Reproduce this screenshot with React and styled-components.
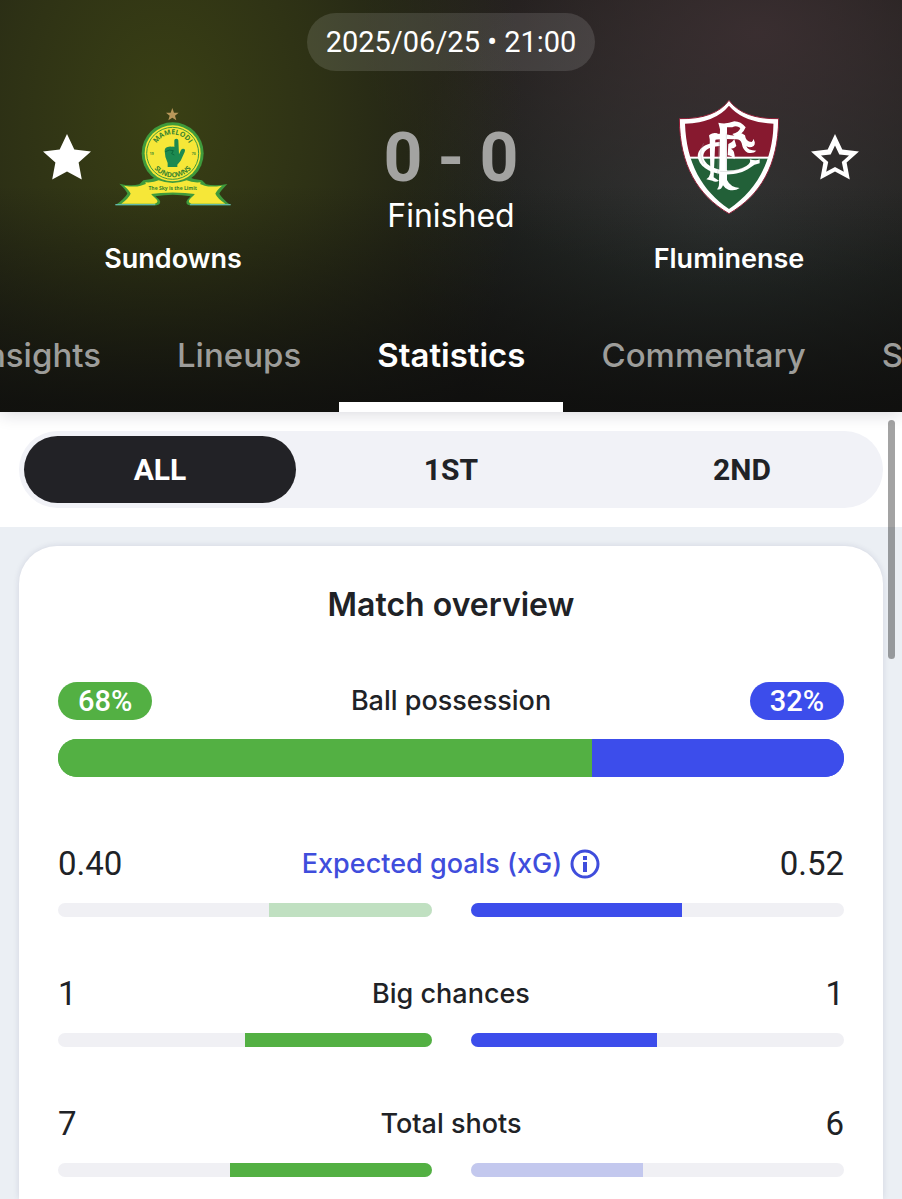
import React, { useLayoutEffect, useRef, useState } from "react";
import styled, { createGlobalStyle, css } from "styled-components";

const GlobalStyle = createGlobalStyle`
  *, *::before, *::after { box-sizing: border-box; }
  body { margin: 0; background: #ebeff4; color: #202226; font-family: Inter, "Liberation Sans", sans-serif; }
  button { font: inherit; color: inherit; background: none; border: 0; padding: 0; margin: 0; cursor: pointer; }
`;

const numeric = css`
  font-family: Roboto, "Liberation Sans", sans-serif;
`;

const Page = styled.div`
  position: relative;
  min-height: 100vh;
  display: flex;
  flex-direction: column;
`;

const Header = styled.header`
  position: relative;
  z-index: 1;
  color: #fff;
  padding-top: 13px;
  background:
    linear-gradient(to bottom, rgba(14, 14, 13, 0) 45%, rgba(14, 14, 13, 0.85) 98%),
    radial-gradient(ellipse 40% 120% at 18% 28%, #3a4014 0%, rgba(58, 64, 20, 0.6) 45%, rgba(58, 64, 20, 0) 100%),
    radial-gradient(ellipse 44% 62% at 84% 8%, rgba(62, 48, 51, 0.85) 0%, rgba(62, 48, 51, 0) 100%),
    radial-gradient(ellipse 36% 66% at 80% 52%, #2c3432 0%, rgba(44, 52, 50, 0) 100%),
    #1a1a17;
  box-shadow: 0 2px 16px rgba(20, 20, 50, 0.16);
`;

const Kickoff = styled.time`
  ${numeric}
  display: block;
  width: fit-content;
  margin: 0 auto;
  padding: 0 19px;
  border-radius: 29px;
  background: rgba(255, 255, 255, 0.12);
  font-size: 29px;
  line-height: 58px;
`;

const Scoreboard = styled.div`
  display: grid;
  grid-template-columns: auto 1fr auto;
  align-items: start;
  padding: 28px 38px 0;
`;

const Side = styled.div`
  display: flex;
  flex-direction: ${(p) => (p.$away ? "row-reverse" : "row")};
  gap: 19px;
`;

const StarButton = styled.button`
  width: 58px;
  height: 116px;
  display: grid;
  place-items: center;
`;

const Team = styled.div`
  width: 116px;
  display: flex;
  flex-direction: column;
  align-items: center;
  gap: 24px;
`;

const Crest = styled.div`
  width: 116px;
  height: 116px;
  display: grid;
  place-items: center;
  svg { display: block; }
`;

const TeamName = styled.span`
  font-size: 27px;
  line-height: 40px;
  font-weight: 600;
  white-space: nowrap;
`;

const Result = styled.div`
  display: flex;
  flex-direction: column;
  align-items: center;
  padding-top: 23px;
`;

const Score = styled.div`
  ${numeric}
  display: flex;
  gap: 15px;
  color: #a3a3a1;
  font-size: 68px;
  line-height: 72px;
  font-weight: 700;
`;

const Status = styled.span`
  font-size: 32px;
  line-height: 44px;
`;

const TabBar = styled.nav`
  position: relative;
  display: flex;
  margin-top: 36px;
  overflow-x: auto;
  scrollbar-width: none;
`;

const Tab = styled.button`
  flex: none;
  height: 97px;
  padding: 0 38px 8px;
  border-bottom: 10px solid ${(p) => (p.$active ? "#fff" : "transparent")};
  color: ${(p) => (p.$active ? "#fff" : "#9d9d9a")};
  font-size: 33px;
  line-height: 40px;
  font-weight: ${(p) => (p.$active ? 600 : 500)};
`;

const PeriodBar = styled.div`
  background: #fff;
  padding: 19px;
`;

const Segments = styled.div`
  display: grid;
  grid-template-columns: repeat(3, 1fr);
  gap: 19px;
  padding: 5px;
  border-radius: 39px;
  background: #f1f2f7;
`;

const Segment = styled.button`
  && { ${numeric} }
  height: 67px;
  border-radius: 34px;
  font-size: 30px;
  line-height: 67px;
  font-weight: 700;
  color: ${(p) => (p.$active ? "#fff" : "#202226")};
  background: ${(p) => (p.$active ? "#222226" : "transparent")};
`;

const Content = styled.main`
  flex: 1;
  display: flex;
  padding: 19px 19px 0;
`;

const Card = styled.section`
  flex: 1;
  padding: 38px 39px 20px;
  border-radius: 38px 38px 0 0;
  background: #fff;
  box-shadow: 0 0 6px rgba(30, 30, 80, 0.12);
`;

const CardTitle = styled.h2`
  margin: 0 0 57px;
  font-size: 32px;
  line-height: 41px;
  font-weight: 600;
  text-align: center;
`;

const StatRow = styled.div`
  display: grid;
  grid-template-columns: 1fr auto 1fr;
  align-items: center;
  height: 38px;
`;

const Possession = styled.div`
  margin-bottom: 68px;
`;

const Pill = styled.span`
  ${numeric}
  justify-self: ${(p) => (p.$away ? "end" : "start")};
  padding: 0 20px;
  border-radius: 19px;
  background: ${(p) => (p.$away ? "#3c4deb" : "#53b043")};
  color: #fff;
  font-size: 29px;
  line-height: 38px;
  font-weight: 500;
`;

const StatName = styled.span`
  font-size: 27px;
  line-height: 38px;
  font-weight: 500;
`;

const StatLink = styled.button`
  display: flex;
  align-items: center;
  gap: 8px;
  && { color: #3f4ddc; }
`;

const StatValue = styled.span`
  ${numeric}
  justify-self: ${(p) => (p.$away ? "end" : "start")};
  font-size: 33px;
  line-height: 38px;
`;

const SplitBar = styled.div`
  display: flex;
  height: 38px;
  margin-top: 19px;
  border-radius: 19px;
  overflow: hidden;
  background: linear-gradient(to right, #53b043 50%, #3c4deb 50%);
`;

const SplitFill = styled.div`
  background: ${(p) => (p.$away ? "#3c4deb" : "#53b043")};
`;

const Stat = styled.div`
  height: 130px;
  &:last-child { height: auto; }
`;

const Bars = styled.div`
  display: grid;
  grid-template-columns: 1fr 1fr;
  gap: 39px;
  margin-top: 20px;
`;

const Track = styled.div`
  display: flex;
  justify-content: ${(p) => (p.$away ? "flex-start" : "flex-end")};
  height: 14px;
  border-radius: 7px;
  overflow: hidden;
  background: #f0f0f4;
`;

const fills = { home: ["#53b043", "#c0e0c1"], away: ["#3c4deb", "#c3c8ee"] };

const Fill = styled.div`
  background: ${(p) => fills[p.$side][p.$faded ? 1 : 0]};
`;

const ScrollThumb = styled.div`
  position: absolute;
  z-index: 2;
  top: 420px;
  right: 7px;
  width: 7px;
  height: 239px;
  border-radius: 4px;
  background: rgba(0, 0, 0, 0.36);
`;

function StarIcon({ filled }) {
  return (
    <svg width="48" height="46" viewBox="0 0 48 46" aria-hidden="true">
      {filled ? (
        <path d="M24 0l7.3 15.6L48 17.4 35.6 28.6 38.8 45.4 24 37.6 9.2 45.4 12.4 28.6 0 17.4 16.7 15.6z" fill="#fff" />
      ) : (
        <path
          fillRule="evenodd"
          d="M24 0l7.3 15.6L48 17.4 35.6 28.6 38.8 45.4 24 37.6 9.2 45.4 12.4 28.6 0 17.4 16.7 15.6zM24 11.5l-4.3 9-9.7 1 7.2 6.6-2 9.7L24 33l8.8 4.8-2-9.7 7.2-6.6-9.7-1z"
          fill="#fff"
        />
      )}
    </svg>
  );
}

function SundownsCrest() {
  return (
    <svg width="116" height="100" viewBox="45 30 348 300" role="img" aria-label="Mamelodi Sundowns">
      <path d="M217 33l5 14 14 0-11 9 4 14-12-8-12 8 4-14-11-9 14 0z" fill="#b9975a" />
      <circle cx="218" cy="169" r="93" fill="#3f9a3c" />
      <path
        d="M58 260Q90 268 118 262L130 250Q150 250 170 240H266Q286 250 306 250L318 262Q346 268 382 261Q360 284 358 290Q366 304 392 325H268Q254 320 262 308L272 298Q218 288 166 298L178 308Q186 320 170 325H46Q74 304 82 290Q78 278 58 260Z"
        fill="#3f9a3c"
      />
      <circle cx="218" cy="169" r="84" fill="#f6e738" />
      <circle cx="218" cy="169" r="78" fill="none" stroke="#3f9a3c" strokeWidth="3" />
      <path d="M72 266Q104 271 122 266L146 258Q140 282 166 304Q180 316 164 320H64Q86 304 92 290Q88 280 72 266Z" fill="#f6e738" />
      <path d="M366 266Q334 271 314 266L292 258Q298 282 272 304Q260 316 274 320H376Q352 304 346 290Q350 280 366 266Z" fill="#f6e738" />
      <path d="M136 256Q160 258 176 250Q218 266 260 250Q276 258 302 256L292 292Q218 281 146 292Z" fill="#f6e738" />
      <path d="M46 323h120M270 323h122" stroke="#63b7ab" strokeWidth="4" />
      <path
        d="M203 210v-12q-9-18-9-36 0-10 9-12 6-3 13-1 4-2 7 1V130q0-5 6-5t6 5l2 42 6-13q4-6 10-3 4 2 1 9l-12 26-10 12v7z"
        fill="#1c8a50"
      />
      <path d="M196 164q12-8 24-3l-5 9 8 4" fill="none" stroke="#0d6a3c" strokeWidth="3" />
      <path id="crest-top" d="M161 169A57 57 0 0 1 275 169" fill="none" />
      <path id="crest-bottom" d="M146 169A72 72 0 0 0 290 169" fill="none" />
      <g fill="#37832f" fontFamily="Open Sans, sans-serif" fontWeight="700" textAnchor="middle">
        <text fontSize="21"><textPath href="#crest-top" startOffset="50%">MAMELODI</textPath></text>
        <text fontSize="21"><textPath href="#crest-bottom" startOffset="50%">SUNDOWNS</textPath></text>
        <text x="155" y="173" fontSize="10">19</text>
        <text x="281" y="173" fontSize="10">70</text>
        <text x="218" y="278" fontSize="15">The Sky is the Limit</text>
      </g>
    </svg>
  );
}

function FluminenseCrest() {
  return (
    <svg width="100" height="114" viewBox="56 30 300 342" role="img" aria-label="Fluminense">
      <defs>
        <clipPath id="shield">
          <path d="M206 47Q166 97 74 101C78 220 126 302 206 357C286 302 336 220 340 101Q248 97 206 47Z" />
        </clipPath>
      </defs>
      <path d="M206 31Q164 88 57 86C58 226 112 316 206 371C300 316 354 226 355 86Q248 88 206 31Z" fill="#fff" stroke="#8f1d35" strokeWidth="3" />
      <g clipPath="url(#shield)">
        <rect x="57" y="30" width="300" height="170" fill="#87192f" />
        <rect x="57" y="206" width="300" height="170" fill="#226038" />
      </g>
      <g fill="#fff">
        <path d="M174 98Q196 104 222 94Q242 94 256 112Q246 136 224 139L216 132Q236 128 240 114Q228 104 216 112L200 112V270Q210 292 238 294Q224 304 204 299Q194 296 188 286Q182 302 170 298Q178 288 176 272L179 118Z" />
        <path d="M148 134Q158 126 172 130L165 150L160 262L176 272Q166 278 156 272L138 268Q148 262 150 250Z" />
        <path d="M146 136Q172 128 204 134Q224 140 244 130L254 136Q256 156 274 156Q280 152 278 146Q288 158 280 168Q268 176 258 168Q262 182 288 182Q280 192 262 188Q248 182 244 160Q240 146 224 148Q176 144 150 152Z" />
        <path d="M204 162Q216 158 222 148L228 168Q222 176 212 176Q226 182 222 208Q214 196 202 196Z" />
        <path d="M178 156C132 158 106 180 114 208C128 256 222 268 268 234Q282 222 298 220L298 208Q288 214 268 208Q274 218 258 228C216 254 142 240 130 206C124 184 144 170 178 168Z" />
      </g>
      <path d="M176 150L172 256M198 130V240M130 160Q112 190 130 222M178 244Q216 248 252 232" fill="none" stroke="#a9abae" strokeWidth="1" />
    </svg>
  );
}

function InfoIcon() {
  return (
    <svg width="30" height="30" viewBox="0 0 30 30" aria-hidden="true">
      <circle cx="15" cy="15" r="13" fill="none" stroke="#3f4ddc" strokeWidth="3" />
      <path d="M13 7h4v4h-4zM13 13h4v10h-4z" fill="#3f4ddc" />
    </svg>
  );
}

const tabs = ["Insights", "Lineups", "Statistics", "Commentary", "Standings"];
const periods = ["ALL", "1ST", "2ND"];
const stats = [
  { name: "Expected goals (xG)", home: "0.40", away: "0.52", info: true },
  { name: "Big chances", home: "1", away: "1" },
  { name: "Total shots", home: "7", away: "6" },
];

function StatLine({ name, home, away, info }) {
  const h = Number(home);
  const a = Number(away);
  const share = (h / (h + a)) * 100;
  return (
    <Stat>
      <StatRow>
        <StatValue>{home}</StatValue>
        {info ? (
          <StatLink type="button">
            <StatName>{name}</StatName>
            <InfoIcon />
          </StatLink>
        ) : (
          <StatName>{name}</StatName>
        )}
        <StatValue $away>{away}</StatValue>
      </StatRow>
      <Bars>
        <Track>
          <Fill $side="home" $faded={h < a} style={{ width: `${share}%` }} />
        </Track>
        <Track $away>
          <Fill $side="away" $faded={a < h} style={{ width: `${100 - share}%` }} />
        </Track>
      </Bars>
    </Stat>
  );
}

export default function App() {
  const [tab, setTab] = useState("Statistics");
  const [period, setPeriod] = useState("ALL");
  const [starred, setStarred] = useState({ home: true, away: false });
  const barRef = useRef(null);
  const activeRef = useRef(null);

  useLayoutEffect(() => {
    const bar = barRef.current;
    const active = activeRef.current;
    bar.scrollLeft = active.offsetLeft - (bar.clientWidth - active.offsetWidth) / 2;
  }, [tab]);

  const toggle = (side) => setStarred((s) => ({ ...s, [side]: !s[side] }));

  return (
    <>
      <GlobalStyle />
      <Page>
        <Header>
          <Kickoff dateTime="2025-06-25T21:00">2025/06/25 • 21:00</Kickoff>
          <Scoreboard>
            <Side>
              <StarButton type="button" aria-label="Follow Sundowns" onClick={() => toggle("home")}>
                <StarIcon filled={starred.home} />
              </StarButton>
              <Team>
                <Crest><SundownsCrest /></Crest>
                <TeamName>Sundowns</TeamName>
              </Team>
            </Side>
            <Result>
              <Score><span>0</span><span>-</span><span>0</span></Score>
              <Status>Finished</Status>
            </Result>
            <Side $away>
              <StarButton type="button" aria-label="Follow Fluminense" onClick={() => toggle("away")}>
                <StarIcon filled={starred.away} />
              </StarButton>
              <Team>
                <Crest><FluminenseCrest /></Crest>
                <TeamName>Fluminense</TeamName>
              </Team>
            </Side>
          </Scoreboard>
          <TabBar ref={barRef}>
            {tabs.map((t) => (
              <Tab key={t} type="button" ref={t === tab ? activeRef : null} $active={t === tab} onClick={() => setTab(t)}>
                {t}
              </Tab>
            ))}
          </TabBar>
        </Header>
        <PeriodBar>
          <Segments>
            {periods.map((p) => (
              <Segment key={p} type="button" $active={p === period} onClick={() => setPeriod(p)}>
                {p}
              </Segment>
            ))}
          </Segments>
        </PeriodBar>
        <Content>
          <Card>
            <CardTitle>Match overview</CardTitle>
            <Possession>
              <StatRow>
                <Pill>68%</Pill>
                <StatName>Ball possession</StatName>
                <Pill $away>32%</Pill>
              </StatRow>
              <SplitBar>
                <SplitFill style={{ width: "68%" }} />
                <SplitFill $away style={{ width: "32%" }} />
              </SplitBar>
            </Possession>
            {stats.map((s) => (
              <StatLine key={s.name} {...s} />
            ))}
          </Card>
        </Content>
        <ScrollThumb />
      </Page>
    </>
  );
}
